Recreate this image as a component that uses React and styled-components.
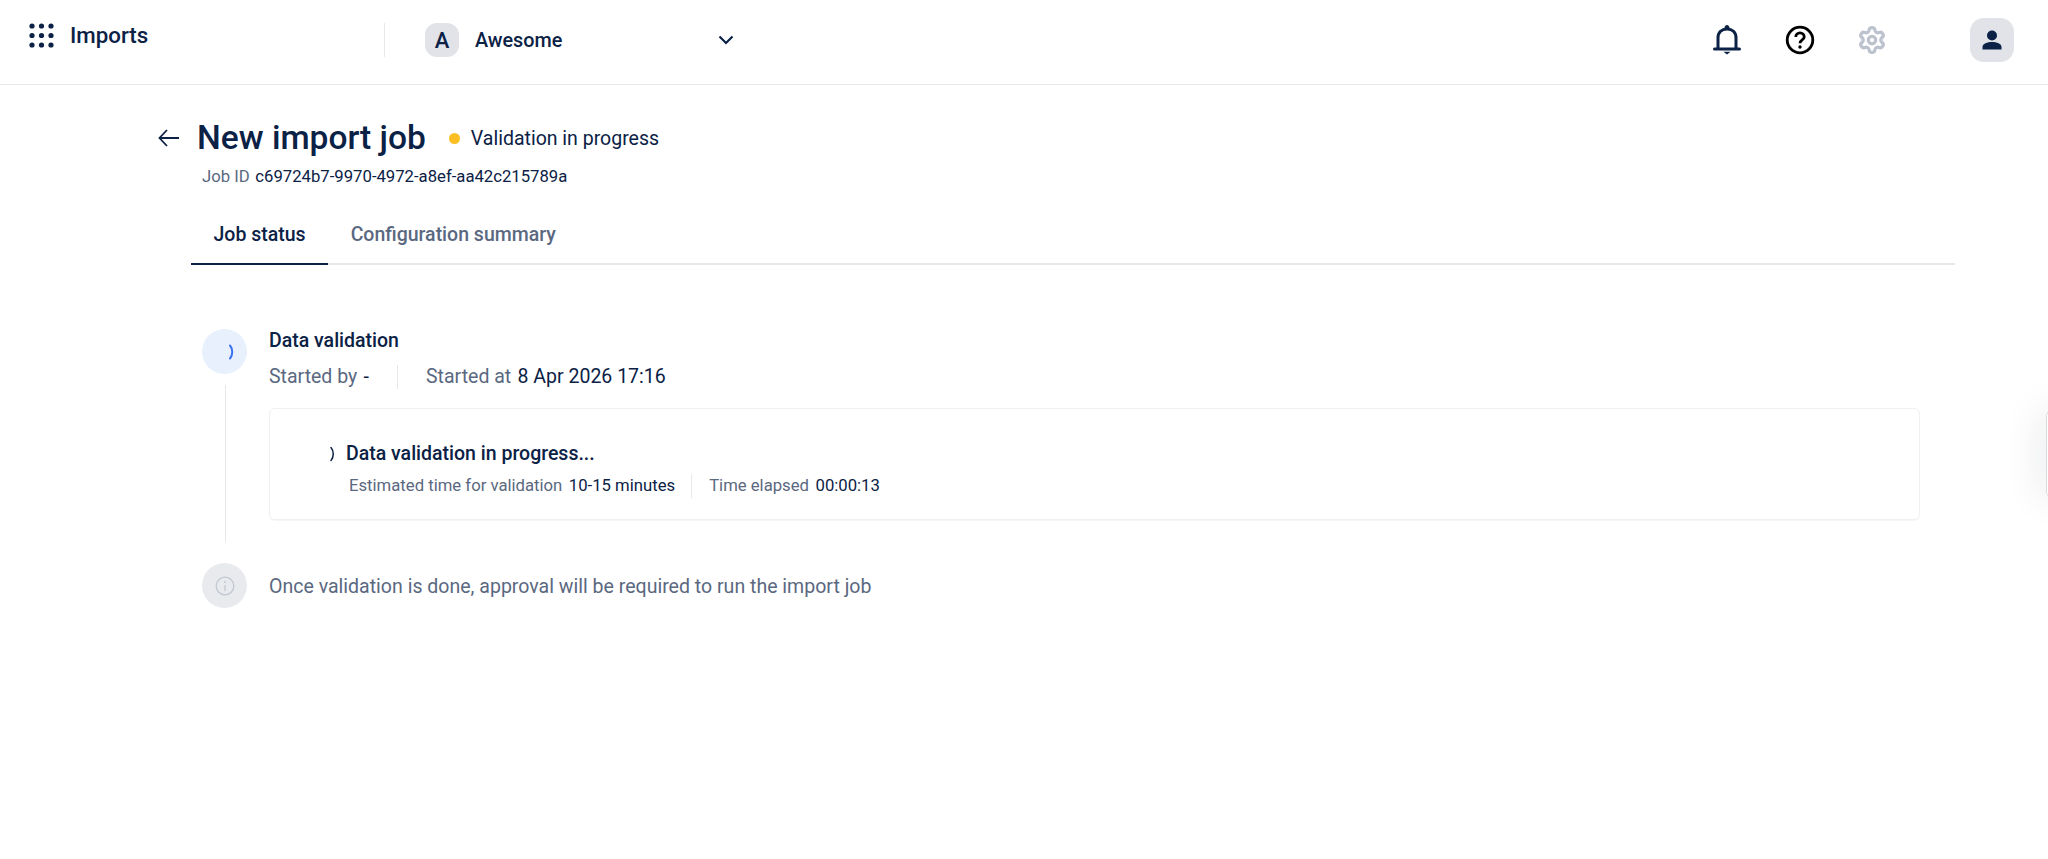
import React from 'react';
import styled, { createGlobalStyle } from 'styled-components';
import { Settings } from 'lucide-react';

const navy = '#0b2145';
const slate = '#5a6880';
const line = '#e6e8ec';

const GlobalStyle = createGlobalStyle`
  html, body {
    margin: 0;
    background: #fff;
    font-family: Roboto, "Liberation Sans", sans-serif;
    color: ${navy};
  }
  * { box-sizing: border-box; }
`;

const Page = styled.div`
  position: relative;
  width: 2048px;
  height: 859px;
  overflow: hidden;
`;

const Header = styled.header`
  display: flex;
  align-items: flex-start;
  height: 85px;
  border-bottom: 1px solid ${line};
`;

const AppArea = styled.div`
  display: flex;
  align-items: center;
  gap: 16px;
  width: 384px;
  padding: 23px 0 0 29px;
`;

const AppName = styled.span`
  margin-top: -2px;
  font-size: 22.3px;
  font-weight: 500;
  line-height: 26px;
`;

const WorkspaceArea = styled.div`
  display: flex;
  align-items: center;
  width: 350px;
  height: 34px;
  margin-top: 23px;
  padding-left: 40px;
  border-left: 1px solid ${line};
`;

const WorkspaceBadge = styled.span`
  display: flex;
  align-items: center;
  justify-content: center;
  width: 34px;
  height: 34px;
  border-radius: 12px;
  background: #e1e3e8;
  font-size: 22px;
  font-weight: 500;
`;

const WorkspaceName = styled.span`
  margin-left: 16px;
  flex: 1;
  font-size: 19.8px;
  font-weight: 500;
`;

const Actions = styled.div`
  display: flex;
  align-items: center;
  margin-left: auto;
  height: 44px;
  margin-top: 18px;
  padding-right: 34px;
`;

const ActionIcon = styled.span`
  display: flex;
  justify-content: center;
  width: 32px;
  margin-right: ${(props) => props.$gap}px;
`;

const UserButton = styled.span`
  display: flex;
  align-items: center;
  justify-content: center;
  width: 44px;
  height: 44px;
  border-radius: 14px;
  background: #e1e3e8;
`;

const Main = styled.main`
  padding: 39px 93px 0 158px;
`;

const TitleRow = styled.div`
  display: flex;
  align-items: center;
  height: 28px;
`;

const Title = styled.h1`
  margin: 0 0 0 18px;
  font-size: 33.5px;
  line-height: 28px;
  font-weight: 500;
  white-space: nowrap;
`;

const StatusDot = styled.span`
  width: 11px;
  height: 11px;
  margin: 0 11px 0 23px;
  border-radius: 50%;
  background: #fbbf24;
`;

const StatusText = styled.span`
  font-size: 19.5px;
`;

const JobLine = styled.div`
  margin: 15px 0 0 44px;
  font-size: 16.7px;
  line-height: 20px;
`;

const Muted = styled.span`
  margin-right: 1.5px;
  color: ${slate};
`;

const Tabs = styled.nav`
  display: flex;
  margin: 25px 0 0 33px;
  border-bottom: 2px solid ${line};
`;

const Tab = styled.span`
  display: block;
  padding: 0 22.5px;
  height: 53px;
  margin-bottom: -2px;
  font-size: 19.5px;
  font-weight: 500;
  line-height: 46px;
  color: ${(props) => (props.$active ? navy : slate)};
  border-bottom: 2px solid ${(props) => (props.$active ? navy : 'transparent')};
`;

const Steps = styled.div`
  display: grid;
  grid-template-columns: 45px 1fr;
  column-gap: 22px;
  row-gap: 21px;
  margin: 64px 35px 0 44px;
`;

const Rail = styled.div`
  display: flex;
  flex-direction: column;
  align-items: center;
`;

const StepCircle = styled.span`
  display: flex;
  align-items: center;
  justify-content: center;
  flex: none;
  width: 45px;
  height: 45px;
  border-radius: 50%;
  background: ${(props) => props.$bg};
`;

const RailLine = styled.span`
  width: 1px;
  height: 157px;
  margin: 11px 0 0 1px;
  background: ${line};
`;

const StepTitle = styled.div`
  margin-top: 1px;
  font-size: 19.5px;
  font-weight: 500;
  line-height: 22px;
`;

const MetaRow = styled.div`
  display: flex;
  align-items: center;
  height: 24px;
  margin-top: 13px;
  font-size: 19.5px;
`;

const MetaCell = styled.span`
  height: 24px;
  line-height: 24px;
  padding-right: 28px;
  margin-right: 28px;
  border-right: 1px solid ${line};
  &:last-child {
    border: 0;
    margin: 0;
    padding: 0;
  }
`;

const ProgressCard = styled.section`
  margin-top: 19px;
  height: 112px;
  padding: 34px 0 0 56px;
  border: 1px solid #eef0f2;
  border-radius: 6px;
  box-shadow: 0 1px 1px rgba(10, 30, 60, 0.04);
`;

const ProgressTitle = styled.div`
  display: flex;
  align-items: center;
  gap: 4px;
  font-size: 19.5px;
  font-weight: 500;
  line-height: 22px;
`;

const ProgressMeta = styled.div`
  display: flex;
  align-items: center;
  height: 24px;
  margin: 9px 0 0 23px;
  font-size: 16.7px;
`;

const ProgressCell = styled.span`
  line-height: 24px;
  height: 24px;
  padding-right: 16px;
  margin-right: 17px;
  border-right: 1px solid ${line};
  &:last-child {
    border: 0;
    margin: 0;
    padding: 0;
  }
`;

const Value = styled.span`
  margin-left: 5px;
  color: ${navy};
`;

const Note = styled.div`
  align-self: center;
  padding-top: 1px;
  font-size: 19.55px;
  color: ${slate};
`;

const EdgePanel = styled.div`
  position: absolute;
  top: 410px;
  left: 2046px;
  width: 20px;
  height: 88px;
  border-radius: 6px;
  background: #fff;
  box-shadow: 0 0 40px rgba(20, 30, 50, 0.14);
  border-left: 1px solid #dcdcdc;
`;

function GridIcon() {
  const dots = [3, 12.5, 22];
  return (
    <svg width="25" height="25" viewBox="0 0 25 25" fill={navy}>
      {dots.map((y) => dots.map((x) => <circle key={`${x}-${y}`} cx={x} cy={y} r="2.6" />))}
    </svg>
  );
}

function Chevron() {
  return (
    <svg width="16" height="10" viewBox="0 0 16 10" fill="none" stroke={navy} strokeWidth="2.200">
      <path d="M1.500 1.500 8 8l6.500-6.500" />
    </svg>
  );
}

function Bell() {
  return (
    <svg width="28" height="30" viewBox="0 0 28 30" fill="none" stroke={navy} strokeWidth="3">
      <path d="M5 23.500V13C5 7.500 8.700 4 14 4s9 3.500 9 9v10.500" />
      <path d="M1.500 24h25" strokeLinecap="round" />
      <path d="M12 3V2.500a2 2 0 0 1 4 0V3" fill={navy} strokeWidth="1" />
      <path d="M10.500 26.800h7L14 29.500z" fill={navy} stroke="none" />
    </svg>
  );
}

function Help() {
  return (
    <svg width="30" height="30" viewBox="0 0 30 30" fill="none" stroke="#000" strokeWidth="2.800">
      <circle cx="15" cy="15" r="12.800" />
      <path d="M10.800 12a4.200 4.200 0 0 1 8.400 0c0 3-4.200 3-4.200 6.300" />
      <circle cx="15" cy="22" r="1.700" fill="#000" stroke="none" />
    </svg>
  );
}

function UserGlyph() {
  return (
    <svg width="22" height="22" viewBox="0 0 22 22" fill={navy}>
      <circle cx="11" cy="6.500" r="5" />
      <path d="M1.500 20.500V18c0-3.200 4.800-5 9.500-5s9.500 1.800 9.500 5v2.500z" />
    </svg>
  );
}

function BackArrow() {
  return (
    <svg width="21" height="18" viewBox="0 0 21 18" fill="none" stroke={navy} strokeWidth="1.800">
      <path d="M9 1 1.500 9 9 17M1.500 9H21" />
    </svg>
  );
}

const Arc = styled.svg`
  flex: none;
  margin-left: ${(props) => props.$offset || 0}px;
`;

function SpinnerArc({ color, offset, weight }) {
  return (
    <Arc $offset={offset} width="16" height="16" viewBox="0 0 16 16" fill="none" stroke={color} strokeWidth={weight} strokeLinecap="round">
      <path d="M5 1.500C8 5 8 11 5 14.500" />
    </Arc>
  );
}

function InfoIcon() {
  return (
    <svg width="20" height="20" viewBox="0 0 20 20" fill="none" stroke="#c2c7d0" strokeWidth="1.300">
      <circle cx="10" cy="10" r="8.800" />
      <path d="M10 9v6" />
      <circle cx="10" cy="6" r=".9" fill="#c2c7d0" stroke="none" />
    </svg>
  );
}

export default function App() {
  return (
    <Page>
      <GlobalStyle />
      <Header>
        <AppArea>
          <GridIcon />
          <AppName>Imports</AppName>
        </AppArea>
        <WorkspaceArea>
          <WorkspaceBadge>A</WorkspaceBadge>
          <WorkspaceName>Awesome</WorkspaceName>
          <Chevron />
        </WorkspaceArea>
        <Actions>
          <ActionIcon $gap={41}><Bell /></ActionIcon>
          <ActionIcon $gap={40}><Help /></ActionIcon>
          <ActionIcon $gap={82}><Settings size={30} color="#bcc2ce" strokeWidth={2.6} /></ActionIcon>
          <UserButton><UserGlyph /></UserButton>
        </Actions>
      </Header>
      <Main>
        <TitleRow>
          <BackArrow />
          <Title>New import job</Title>
          <StatusDot />
          <StatusText>Validation in progress</StatusText>
        </TitleRow>
        <JobLine>
          <Muted>Job ID</Muted> c69724b7-9970-4972-a8ef-aa42c215789a
        </JobLine>
        <Tabs>
          <Tab $active>Job status</Tab>
          <Tab>Configuration summary</Tab>
        </Tabs>
        <Steps>
          <Rail>
            <StepCircle $bg="#e8f0fe"><SpinnerArc color="#3b72f2" offset={17} weight={2} /></StepCircle>
            <RailLine />
          </Rail>
          <div>
            <StepTitle>Data validation</StepTitle>
            <MetaRow>
              <MetaCell><Muted>Started by</Muted> -</MetaCell>
              <MetaCell><Muted>Started at</Muted> 8 Apr 2026 17:16</MetaCell>
            </MetaRow>
            <ProgressCard>
              <ProgressTitle>
                <SpinnerArc color={navy} weight={1.5} />
                Data validation in progress...
              </ProgressTitle>
              <ProgressMeta>
                <ProgressCell><Muted>Estimated time for validation</Muted><Value>10-15 minutes</Value></ProgressCell>
                <ProgressCell><Muted>Time elapsed</Muted><Value>00:00:13</Value></ProgressCell>
              </ProgressMeta>
            </ProgressCard>
          </div>
          <StepCircle $bg="#e8eaee"><InfoIcon /></StepCircle>
          <Note>Once validation is done, approval will be required to run the import job</Note>
        </Steps>
      </Main>
      <EdgePanel />
    </Page>
  );
}
